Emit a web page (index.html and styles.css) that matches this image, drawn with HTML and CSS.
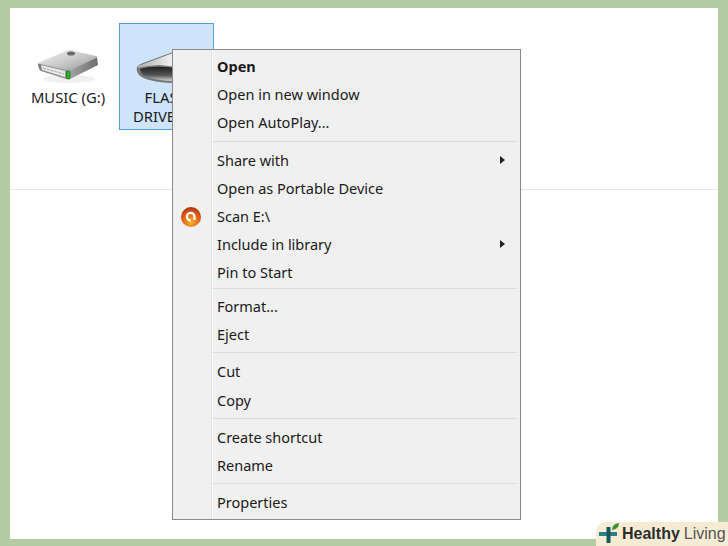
FILE: index.html
```html
<!DOCTYPE html>
<html lang="en">
<head>
<meta charset="utf-8">
<title>Explorer context menu</title>
<link rel="stylesheet" href="styles.css">
</head>
<body>
<main class="window">
  <section class="drives">
    <div class="drive">
      <svg class="drive-icon" viewBox="0 0 64 40" width="64" height="40" aria-hidden="true">
        <defs>
          <linearGradient id="hddTop" x1="0" y1="0" x2="1" y2="1"><stop offset="0" stop-color="#f1f1f1"/><stop offset=".55" stop-color="#c8c8c8"/><stop offset="1" stop-color="#8e8e8e"/></linearGradient>
          <linearGradient id="hddRight" x1="0" y1="0" x2="1" y2="0"><stop offset="0" stop-color="#a5a5a5"/><stop offset="1" stop-color="#6e6e6e"/></linearGradient>
          <linearGradient id="hddFront" x1="0" y1="0" x2="1" y2="0"><stop offset="0" stop-color="#7c7c7c"/><stop offset="1" stop-color="#9b9b9b"/></linearGradient>
        </defs>
        <ellipse cx="33" cy="31" rx="26" ry="4" fill="#f0f0f0"/>
        <path d="M2 15 L33 22 L33 31 L30 31 L5 23 Q2 21 2 15Z" fill="url(#hddFront)"/>
        <path d="M33 22 L61 9 L62 17 L34 31 L33 31Z" fill="url(#hddRight)"/>
        <path d="M2 15 L30 3 Q34 1 38 3 L60 8 Q62 9 60 10 L35 22 Q33 23 30 22 L4 16 Q2 16 2 15Z" fill="url(#hddTop)"/>
        <ellipse cx="35" cy="5.500" rx="4" ry="2" fill="#6a6a6a"/>
        <path d="M5 17 L29 23 L29 29 L6 22Z" fill="#e9e9e9"/>
        <path d="M7 20 L28 26" stroke="#a8a8a8" stroke-width="1" stroke-dasharray="3 1"/>
        <rect x="30.500" y="23" width="3.500" height="8" rx="1" fill="#27b52a" stroke="#0f5a14" stroke-width=".6"/>
      </svg>
      <span class="drive-label">MUSIC (G:)</span>
    </div>
    <div class="drive drive-selected">
      <svg class="drive-icon" viewBox="0 0 64 40" width="64" height="40" aria-hidden="true">
        <defs>
          <linearGradient id="flashBody" x1="0" y1="0" x2="1" y2="0"><stop offset="0" stop-color="#b0b0b0"/><stop offset=".6" stop-color="#f2f2f2"/><stop offset="1" stop-color="#bbbbbb"/></linearGradient>
          <linearGradient id="flashSlot" x1="0" y1="0" x2="0" y2="1"><stop offset="0" stop-color="#1f1f1f"/><stop offset=".6" stop-color="#555"/><stop offset="1" stop-color="#d5d5d5"/></linearGradient>
        </defs>
        <path d="M2 19 Q3 17 8 15 L38 4 L62 6 L62 35 L38 35 Q12 34 4 27 Q1 23 2 19Z" fill="#777"/>
        <path d="M3 18 L38 5 L62 7 L62 21 L24 17 Q10 18 3 20Z" fill="url(#flashBody)"/>
        <path d="M5 21 Q18 17 40 20 L62 22 L62 33 L38 33 Q14 32 7 26Z" fill="url(#flashSlot)"/>
      </svg>
      <span class="drive-label">FLASH<br>DRIVE (E:)</span>
    </div>
  </section>
  <hr class="rule">
  <nav class="menu">
    <ul class="group">
      <li class="item item-default">Open</li>
      <li class="item">Open in new window</li>
      <li class="item">Open AutoPlay...</li>
    </ul>
    <ul class="group group-tight">
      <li class="item has-sub">Share with</li>
      <li class="item">Open as Portable Device</li>
      <li class="item">
        <svg class="item-icon" viewBox="0 0 20 20" width="20" height="20" aria-hidden="true">
          <defs><radialGradient id="scanBall" cx=".5" cy=".75" r=".8"><stop offset="0" stop-color="#f8b62a"/><stop offset=".55" stop-color="#e0601a"/><stop offset="1" stop-color="#a32a10"/></radialGradient></defs>
          <circle cx="10" cy="10" r="10" fill="url(#scanBall)"/>
          <path d="M13.500 13 L13.500 9.500 A3.800 3.800 0 1 0 9.800 13.500" fill="none" stroke="#fff" stroke-width="2.200"/>
        </svg>Scan E:\</li>
      <li class="item has-sub">Include in library</li>
      <li class="item">Pin to Start</li>
    </ul>
    <ul class="group">
      <li class="item">Format...</li>
      <li class="item">Eject</li>
    </ul>
    <ul class="group">
      <li class="item">Cut</li>
      <li class="item">Copy</li>
    </ul>
    <ul class="group">
      <li class="item">Create shortcut</li>
      <li class="item">Rename</li>
    </ul>
    <ul class="group">
      <li class="item">Properties</li>
    </ul>
  </nav>
</main>
<aside class="badge">
  <svg class="badge-logo" viewBox="0 0 24 24" width="24" height="24" aria-hidden="true">
    <path d="M1 10 H19 V14 H1Z" fill="#2a7f88"/>
    <path d="M8.500 5 H12.500 V21 H8.500Z" fill="#17585f"/>
    <path d="M14 8 Q14 2 21 1 Q21 7 14 8Z" fill="#3f8f35"/>
  </svg>
  <span class="badge-strong">Healthy</span><span class="badge-light">Living</span>
</aside>
</body>
</html>
```
FILE: styles.css
```css
* { box-sizing: border-box; }
html, body { margin: 0; height: 100%; }
body {
  position: relative;
  width: 728px;
  height: 546px;
  overflow: hidden;
  background: #b5cba3;
  padding: 8px 10px 7px 10px;
  font-family: "Noto Sans", "Open Sans", sans-serif;
  color: #1a1a1a;
}
.window {
  position: relative;
  height: 100%;
  background: #fff;
}
.drives {
  display: flex;
  gap: 7px;
  height: 181px;
  padding: 15px 0 0 14px;
  align-items: flex-start;
}
.drive {
  display: flex;
  flex-direction: column;
  align-items: center;
  font-size: 14.8px;
  line-height: 19px;
  text-align: center;
}
.drive:first-child { width: 88px; padding-top: 24.5px; }
.drive-selected {
  width: 95px;
  height: 107px;
  padding-top: 23.5px;
  background: #cde4fb;
  border: 1px solid #5a9bd0;
}
.drive-icon { flex: none; }
.drive-label { white-space: nowrap; }
.rule { margin: 0; border: 0; height: 1px; background: #e6e6e6; }
.menu {
  position: absolute;
  left: 162px;
  top: 41px;
  width: 349px;
  height: 471px;
  padding: 2px 3px 2px 2px;
  border: 1px solid #8a8a8a;
  background: linear-gradient(to right, #f0f0f0 38px, #e3e3e3 38px, #e3e3e3 39px, #fafafa 39px, #fafafa 40px, #f0f0f0 40px);
  font-size: 14.5px;
}
.group {
  list-style: none;
  margin: 0;
  padding: 0 0 4px;
}
.group + .group { border-top: 1px solid #dcdcdc; margin-left: 38px; padding-top: 4px; }
.group:last-child { padding-bottom: 0; }
.group + .group .item { padding-left: 4px; }
.group:first-child .item { padding-left: 42px; }
.group-tight { padding-bottom: 1.5px; }
.group-tight + .group { padding-top: 3px; }
.item {
  position: relative;
  display: flex;
  align-items: center;
  height: 28.2px;
  white-space: nowrap;
}
.item-default { font-weight: 700; }
.item-icon { position: absolute; left: -32px; top: 5px; }
.has-sub::after {
  content: "";
  position: absolute;
  right: 12px;
  top: 10px;
  border-left: 5px solid #222;
  border-top: 4.500px solid transparent;
  border-bottom: 4.500px solid transparent;
}
.badge {
  position: absolute;
  left: 596px;
  bottom: 0;
  width: 132px;
  height: 24px;
  display: flex;
  align-items: center;
  gap: 4px;
  padding-left: 2px;
  background: #f6ecd4;
  border-top-left-radius: 10px;
  font-family: "Liberation Sans", Arial, sans-serif;
  font-size: 16px;
  color: #2c2c2c;
}
.badge-logo { flex: none; margin-right: -4px; }
.badge-strong { font-weight: 700; }
.badge-light { color: #555; }
```
